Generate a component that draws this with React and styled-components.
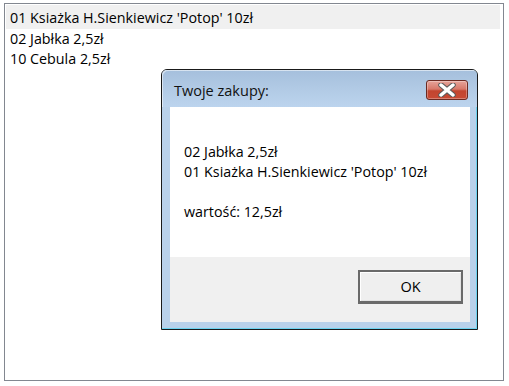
import React from "react";
import styled, { createGlobalStyle } from "styled-components";

const GlobalStyle = createGlobalStyle`
    html, body {
        margin: 0;
        padding: 0;
        background: #ffffff;
    }
    body {
        font-family: "Open Sans", "Noto Sans", sans-serif;
        color: #000000;
    }
`;

const Page = styled.div`
    position: relative;
    width: 509px;
    height: 386px;
    padding: 3px 4px;
    box-sizing: border-box;
`;

const ListBox = styled.ul`
    list-style: none;
    margin: 0;
    padding: 1px 3px 0 1px;
    width: 500px;
    height: 378px;
    box-sizing: border-box;
    border: 1px solid #828790;
    font-size: 14.3px;
`;

const ListItem = styled.li`
    height: ${(p) => (p.$selected ? "24px" : "20px")};
    line-height: 20px;
    padding: ${(p) => (p.$selected ? "3px 4px 0" : "0 4px")};
    box-sizing: border-box;
    white-space: nowrap;
    background: ${(p) => (p.$selected ? "#f0f0f0" : "transparent")};
`;

const Dialog = styled.div`
    position: absolute;
    left: 161px;
    top: 69px;
    width: 317px;
    height: 261px;
    box-sizing: border-box;
    border: 1px solid #1a1a1a;
    border-radius: 6px 6px 0 0;
    background: #b9d1ea;
    box-shadow: inset -1px -1px 0 #6cd3f0;
    padding: 0 7px 7px 8px;
    display: flex;
    flex-direction: column;
`;

const TitleBar = styled.div`
    height: 37px;
    flex-shrink: 0;
    display: flex;
    align-items: center;
    justify-content: space-between;
    margin: 0 -7px 0 -8px;
    padding: 0 9px 0 12px;
    border-radius: 5px 5px 0 0;
    background: linear-gradient(#a5bfdc 0%, #b0c9e4 45%, #bcd4ee 100%);
    box-shadow: inset 1px 1px 0 rgba(255, 255, 255, 0.55);
`;

const Title = styled.span`
    font-size: 14.5px;
    color: #111111;
    padding-top: 3px;
`;

const CloseButton = styled.button`
    width: 42px;
    height: 20px;
    margin-top: 2px;
    padding: 0;
    border: 1px solid #6b2a22;
    border-radius: 3px;
    background: linear-gradient(#e6a49a 0%, #d7786a 45%, #c2452f 55%, #c84a34 100%);
    box-shadow: inset 0 0 0 1px rgba(255, 255, 255, 0.3);
    display: flex;
    align-items: center;
    justify-content: center;
`;

const Content = styled.div`
    height: 150px;
    flex-shrink: 0;
    background: #ffffff;
    padding: 35px 14px 0;
    box-sizing: border-box;
    font-size: 14.3px;
    line-height: 20px;
`;

const Line = styled.div`
    white-space: nowrap;
    min-height: 19.5px;
`;

const Footer = styled.div`
    flex: 1;
    background: #f0f0f0;
    display: flex;
    justify-content: flex-end;
    align-items: flex-start;
    padding: 13px 7px 0 0;
`;

const OkButton = styled.button`
    width: 105px;
    height: 34px;
    box-sizing: border-box;
    border: 2px solid #6a6a6a;
    border-bottom-width: 3px;
    background: #efefef;
    box-shadow: inset 1px 1px 0 #ffffff, inset -1px -1px 0 #e3e3e3;
    font-family: "Open Sans", "Noto Sans", sans-serif;
    font-size: 14.5px;
    color: #000000;
    padding: 0;
`;

const CloseIcon = () => (
    <svg width="20" height="14" viewBox="0 0 20 14">
        <path
            d="M4 2 L16 12 M16 2 L4 12"
            stroke="#5a5a5a"
            strokeWidth="5.5"
            strokeLinecap="round"
        />
        <path
            d="M4 2 L16 12 M16 2 L4 12"
            stroke="#ffffff"
            strokeWidth="3.5"
            strokeLinecap="round"
        />
    </svg>
);

const items = [
    "01 Ksiażka H.Sienkiewicz 'Potop' 10zł",
    "02 Jabłka 2,5zł",
    "10 Cebula 2,5zł",
];

export default function App() {
    return (
        <>
            <GlobalStyle />
            <Page>
                <ListBox>
                    {items.map((item, i) => (
                        <ListItem key={item} $selected={i === 0}>
                            {item}
                        </ListItem>
                    ))}
                </ListBox>
                <Dialog>
                    <TitleBar>
                        <Title>Twoje zakupy:</Title>
                        <CloseButton aria-label="close">
                            <CloseIcon />
                        </CloseButton>
                    </TitleBar>
                    <Content>
                        <Line>02 Jabłka 2,5zł</Line>
                        <Line>01 Ksiażka H.Sienkiewicz 'Potop' 10zł</Line>
                        <Line />
                        <Line>wartość: 12,5zł</Line>
                    </Content>
                    <Footer>
                        <OkButton>OK</OkButton>
                    </Footer>
                </Dialog>
            </Page>
        </>
    );
}
